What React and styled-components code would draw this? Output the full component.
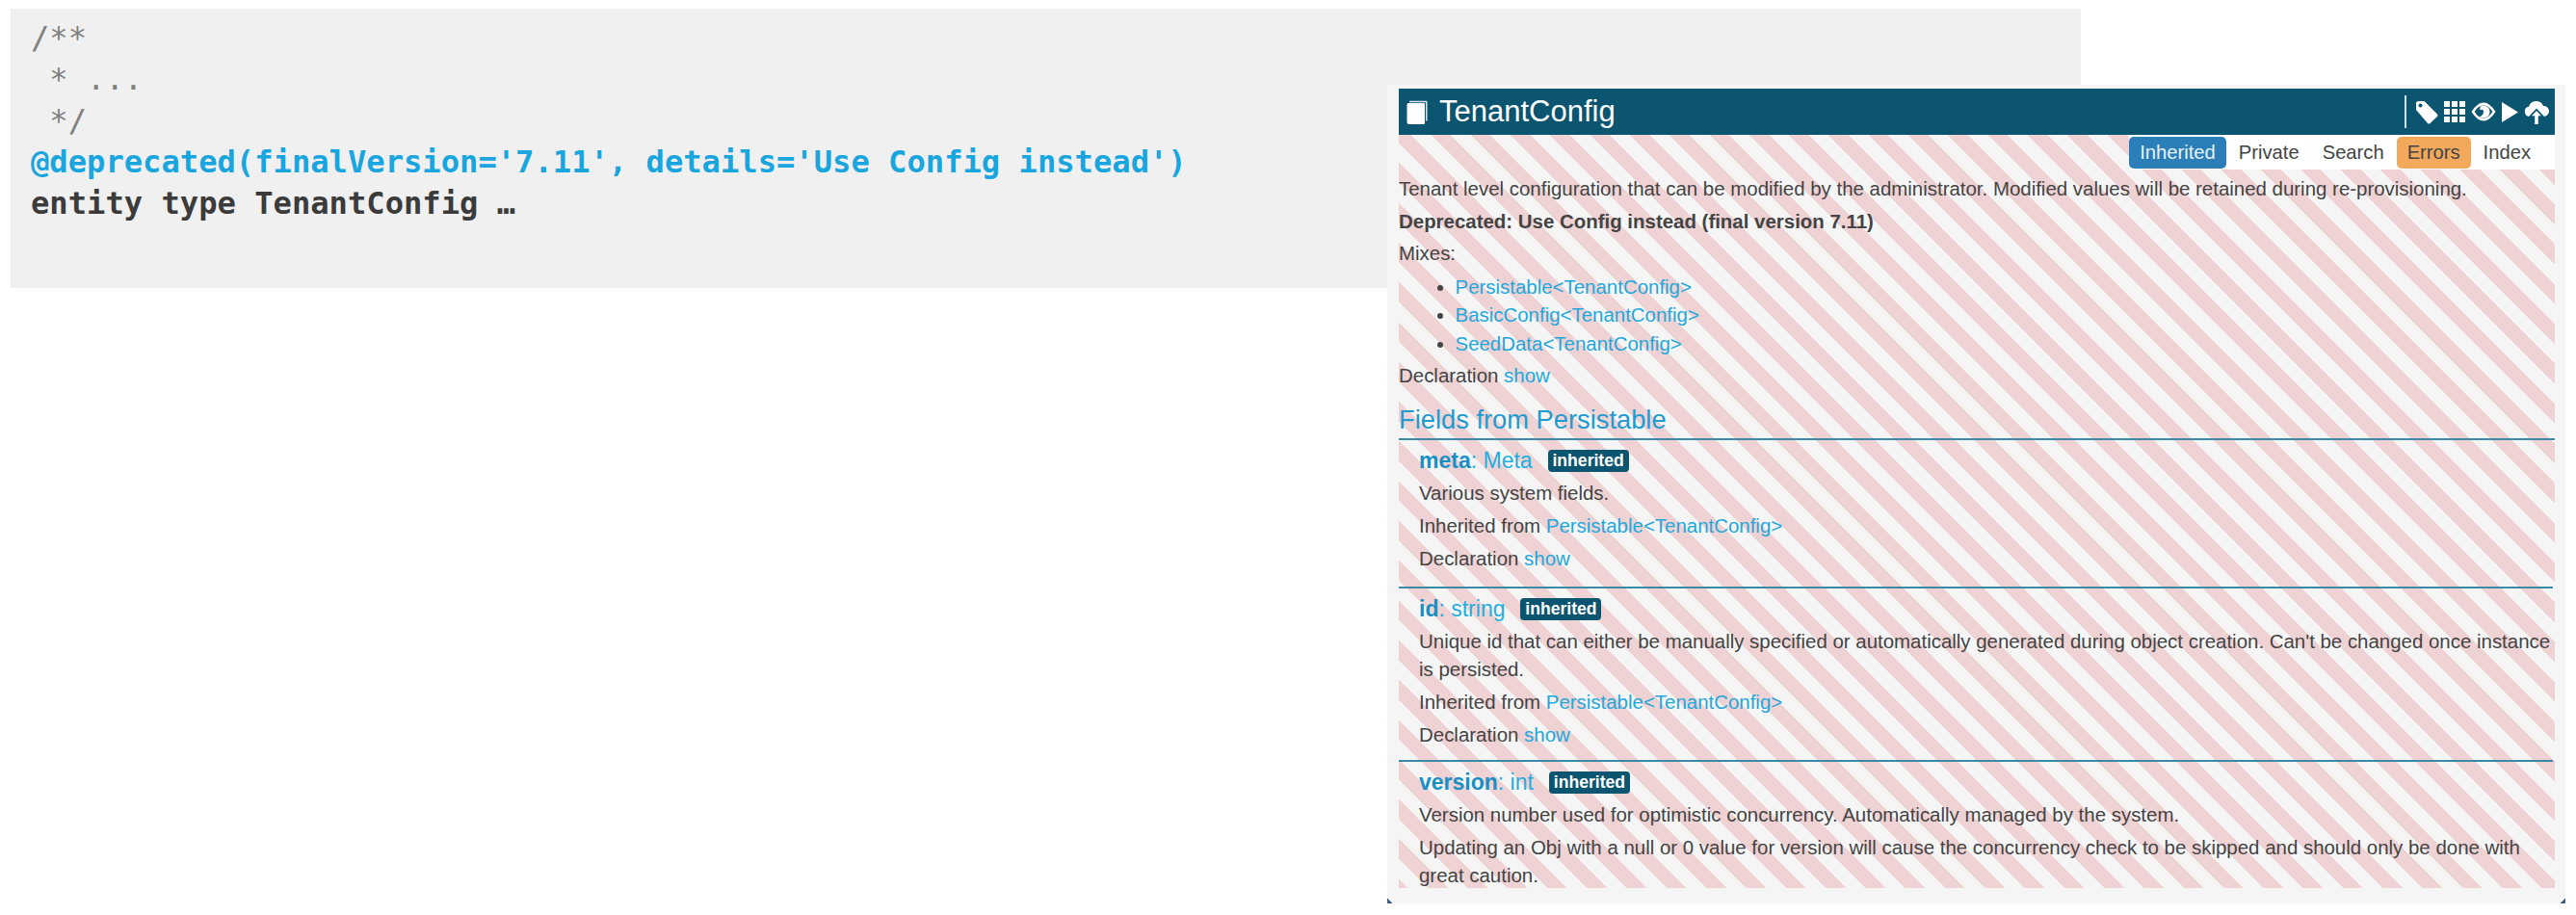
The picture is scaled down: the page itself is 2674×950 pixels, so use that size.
import React from "react";
import styled, { createGlobalStyle } from "styled-components";

const Global = createGlobalStyle`
  html, body { margin: 0; padding: 0; background: #fff; }
  body { width: 2674px; height: 950px; overflow: hidden; position: relative; font-family: "Liberation Sans", Arial, sans-serif; }
`;

const CodePanel = styled.pre`
  margin: 9px 0 0 11px;
  width: 2149px;
  height: 290px;
  box-sizing: border-box;
  padding: 9px 0 0 21px;
  background: #f0f0f0;
  font-family: "DejaVu Sans Mono", "Liberation Mono", monospace;
  font-size: 32.15px;
  line-height: 43px;
  color: #808080;
`;
const CodeLine = styled.div`
  height: 43px;
  font-weight: ${p => (p.$bold ? 700 : 400)};
  color: ${p => p.$color || "inherit"};
`;

const Card = styled.section`
  position: absolute;
  left: 1440px;
  top: 88px;
  width: 1223px;
  height: 850px;
  box-sizing: border-box;
  padding: 4px 11px 16px 12px;
  background:
    linear-gradient(45deg, #3e5f80 4px, transparent 4px),
    linear-gradient(-45deg, #3e5f80 4px, transparent 4px),
    #f5f5f5;
  color: #444;
  font-size: 20.45px;
  line-height: 29px;
`;
const Header = styled.header`
  height: 48px;
  background: #0b5570;
  color: #fff;
  display: flex;
  align-items: center;
  padding: 0 6px 0 8px;
`;
const Title = styled.h1`
  margin: 0 0 0 12px;
  font-size: 31px;
  font-weight: 400;
  line-height: 48px;
  flex: 1;
`;
const BookSvg = styled.svg`
  width: 22px;
  height: 25px;
  flex: none;
`;
const Sep = styled.span`
  width: 2px;
  height: 34px;
  background: #cfe0e6;
  margin-right: 9px;
`;
const IconRow = styled.div`
  display: flex;
  align-items: center;
  gap: 6px;
`;
const Body = styled.div`
  height: 782px;
  box-sizing: border-box;
  overflow: hidden;
  background: repeating-linear-gradient(
    45deg,
    #efd3d4 0 6.9px,
    #f5f5f5 6.9px 21.5px,
    #efd3d4 21.5px 29.2px
  );
`;
const TabRow = styled.nav`
  display: flex;
  justify-content: flex-end;
`;
const Tabs = styled.div`
  display: flex;
  gap: 2px;
  height: 36px;
  padding: 2px 14px 1px 0;
  box-sizing: border-box;
  background: #fff;
  font-size: 20.2px;
`;
const Tab = styled.span`
  padding: 0 11px;
  line-height: 33px;
  border-radius: 5px;
  background: ${p => p.$bg || "transparent"};
  color: ${p => p.$color || "#444"};
`;
const Para = styled.p`
  margin: 0 0 ${p => p.$gap ?? 5}px;
`;
const Top = styled.div`
  padding-top: 4.5px;
`;
const MixList = styled.ul`
  margin: 6px 0 4px;
  padding: 0 0 0 58.5px;
  line-height: 29.5px;
`;
const Link = styled.a`
  color: #1fa8dc;
`;
const SectionTitle = styled.h2`
  margin: 12.5px 0 0;
  font-size: 27.3px;
  font-weight: 400;
  line-height: 38px;
  color: #1f9bd0;
  border-bottom: 2px solid #3c8aa6;
`;
const Field = styled.article`
  padding: 7px 0 0 21px;
  margin-right: 2px;
  height: ${p => p.$h}px;
  box-sizing: border-box;
  border-bottom: ${p => (p.$last ? "none" : "2px solid #3c8aa6")};
`;
const FieldHead = styled.div`
  display: flex;
  align-items: center;
  height: 29px;
  margin-bottom: 4.5px;
  font-size: 23px;
  color: #22aee0;
`;
const FieldName = styled.b`
  color: #1a8fc4;
`;
const Colon = styled.span`
  white-space: pre;
`;
const Badge = styled.span`
  margin-left: 16px;
  width: 84px;
  height: 23px;
  border-radius: 4px;
  background: #0b5570;
  color: #fff;
  font-size: 17.6px;
  font-weight: 700;
  line-height: 22px;
  text-align: center;
`;

const Book = () => (
  <BookSvg viewBox="0 0 22 25">
    <path d="M3 0.8H20.5a1 1 0 0 1 1 1V21.5H20V2.2H3z" fill="#d8e6ea" />
    <path d="M2 3h16a1 1 0 0 1 1 1V24a1 1 0 0 1-1 1H3a2.5 2.5 0 0 1-2.5-2.5V4.5A1.5 1.5 0 0 1 2 3z" fill="#fff" />
  </BookSvg>
);

const Icon = styled.svg`
  display: block;
  flex: none;
`;

const Icons = () => (
  <IconRow>
    <Icon width="24" height="25" viewBox="0 0 24 25">
      <path d="M1 3.5Q1 1 3.5 1H9.5L23 14.5Q24 16 23 17L15.5 24Q14.5 25 13 24L1 10Z" fill="#fff" />
      <circle cx="5.5" cy="5.5" r="2" fill="#0b5570" />
    </Icon>
    <Icon width="22" height="22" viewBox="0 0 22 22" fill="#fff">
      {[0, 8, 16].flatMap(y => [0, 8, 16].map(x => <rect key={x + "-" + y} x={x} y={y} width="6" height="6" />))}
    </Icon>
    <Icon width="26" height="20" viewBox="0 0 26 20">
      <path d="M0.5 10Q6.5 0.5 13 0.5T25.5 10Q19.5 19.5 13 19.5T0.5 10Z" fill="#fff" />
      <path d="M3.6 10Q8 3.2 13 3.2T22.4 10Q18 16.8 13 16.8T3.6 10Z" fill="#0b5570" />
      <path d="M10 4.4A6.5 6.5 0 1 1 9 15.2Q13 14 13 9.6A2 2 0 0 0 9.5 8.4Q8.6 6 10 4.4Z" fill="#fff" />
    </Icon>
    <Icon width="17" height="21" viewBox="0 0 17 21">
      <path d="M0 0L17 10.5L0 21Z" fill="#fff" />
    </Icon>
    <Icon width="26" height="26" viewBox="0 0 26 26">
      <path d="M6 18a5.2 5.2 0 0 1-1-10.3A8 8 0 0 1 20 7a5.5 5.5 0 0 1 1 11Z" fill="#fff" />
      <path d="M13 9.5L21 18H15.5V26H10.5V18H5Z" fill="#0b5570" />
      <path d="M13 12L18 17.3H14.8V26H11.2V17.3H8Z" fill="#fff" />
    </Icon>
  </IconRow>
);

const inherited = "Persistable<TenantConfig>";

const Meta = ({ name, type, h, last, children }) => (
  <Field $h={h} $last={last}>
    <FieldHead>
      <FieldName>{name}</FieldName>
      <Colon>: {type}</Colon>
      <Badge>inherited</Badge>
    </FieldHead>
    {children}
  </Field>
);

const Footer = () => (
  <>
    <Para>Inherited from <Link>{inherited}</Link></Para>
    <Para>Declaration <Link>show</Link></Para>
  </>
);

export default function App() {
  return (
    <>
      <Global />
      <CodePanel>
        <CodeLine>/**</CodeLine>
        <CodeLine> * ...</CodeLine>
        <CodeLine> */</CodeLine>
        <CodeLine $bold $color="#19a5de">@deprecated(finalVersion='7.11', details='Use Config instead')</CodeLine>
        <CodeLine $bold $color="#3b3b3b">entity type TenantConfig …</CodeLine>
      </CodePanel>
      <Card>
        <Header>
          <Book />
          <Title>TenantConfig</Title>
          <Sep />
          <Icons />
        </Header>
        <Body>
          <TabRow>
            <Tabs>
              <Tab $bg="#2a7fb8" $color="#e8f2f8">Inherited</Tab>
              <Tab>Private</Tab>
              <Tab>Search</Tab>
              <Tab $bg="#f3a95b">Errors</Tab>
              <Tab>Index</Tab>
            </Tabs>
          </TabRow>
          <Top>
            <Para>Tenant level configuration that can be modified by the administrator. Modified values will be retained during re-provisioning.</Para>
            <Para $gap={4}><b>Deprecated: Use Config instead (final version 7.11)</b></Para>
            <Para>Mixes:</Para>
            <MixList>
              <li><Link>{inherited}</Link></li>
              <li><Link>{"BasicConfig<TenantConfig>"}</Link></li>
              <li><Link>{"SeedData<TenantConfig>"}</Link></li>
            </MixList>
            <Para>Declaration <Link>show</Link></Para>
            <SectionTitle>Fields from Persistable</SectionTitle>
            <Meta name="meta" type="Meta" h={154}>
              <Para>Various system fields.</Para>
              <Footer />
            </Meta>
            <Meta name="id" type="string" h={180}>
              <Para>Unique id that can either be manually specified or automatically generated during object creation. Can't be changed once instance is persisted.</Para>
              <Footer />
            </Meta>
            <Meta name="version" type="int" h={130} last>
              <Para>Version number used for optimistic concurrency. Automatically managed by the system.</Para>
              <Para>Updating an Obj with a null or 0 value for version will cause the concurrency check to be skipped and should only be done with great caution.</Para>
            </Meta>
          </Top>
        </Body>
      </Card>
    </>
  );
}
